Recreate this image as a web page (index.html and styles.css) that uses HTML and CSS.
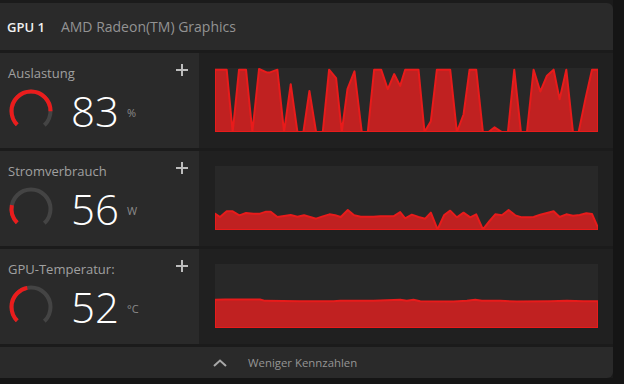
FILE: index.html
```html
<!DOCTYPE html>
<html lang="de">

<head>
    <meta charset="UTF-8">
    <meta name="viewport" content="width=device-width, initial-scale=1.0">
    <title>GPU 1</title>
    <link rel="stylesheet" href="styles.css">
</head>

<body>
    <div class="panel">
        <div class="head">
            <span class="gpu">GPU 1</span>
            <span class="model">AMD Radeon(TM) Graphics</span>
        </div>

        <div class="row">
            <div class="info">
                <div class="top">
                    <span class="label">Auslastung</span>
                    <span class="plus"></span>
                </div>
                <div class="value">
                    <svg class="gauge" viewBox="0 0 44 44">
                        <circle class="track" cx="22" cy="22" r="19.5" stroke-dasharray="91.9 200"></circle>
                        <circle class="fill" cx="22" cy="22" r="19.5" stroke-dasharray="76.3 200"></circle>
                    </svg>
                    <span class="num">83</span>
                    <span class="unit">%</span>
                </div>
            </div>
            <div class="chart">
                <svg viewBox="45 42 1148 190" preserveAspectRatio="none">
                    <polygon class="area" points="45,47 80,47 98,232 117,47 138,47 157,232 177,45 200,55 210,55 232,47 252,232 272,90 292,232 310,232 328,110 348,232 368,232 387,47 408,72 425,232 442,105 463,52 485,232 503,232 522,47 543,47 563,105 582,60 600,95 615,47 655,47 673,232 692,200 710,47 750,47 770,232 790,180 808,47 828,47 848,232 865,232 883,218 905,232 923,232 942,47 962,232 980,232 1000,47 1020,112 1040,65 1060,47 1078,135 1098,47 1118,232 1135,232 1155,135 1175,47 1193,47 1193,232 45,232"></polygon>
                </svg>
            </div>
        </div>

        <div class="row">
            <div class="info">
                <div class="top">
                    <span class="label">Stromverbrauch</span>
                    <span class="plus"></span>
                </div>
                <div class="value">
                    <svg class="gauge" viewBox="0 0 44 44">
                        <circle class="track" cx="22" cy="22" r="19.5" stroke-dasharray="91.9 200"></circle>
                        <circle class="fill" cx="22" cy="22" r="19.5" stroke-dasharray="19 200"></circle>
                    </svg>
                    <span class="num">56</span>
                    <span class="unit">W</span>
                </div>
            </div>
            <div class="chart">
                <svg viewBox="45 50 1148 192" preserveAspectRatio="none">
                    <polygon class="area" points="45,193 60,203 80,186 98,186 118,198 138,191 160,193 180,193 198,187 212,187 232,203 252,200 272,197 292,202 312,198 330,203 348,208 368,201 388,195 405,198 422,203 443,182 462,198 482,202 500,202 520,202 540,201 560,201 580,201 600,188 615,207 635,196 655,203 675,208 692,190 712,240 732,197 750,184 770,204 790,190 810,204 828,195 848,240 868,215 885,195 905,198 925,182 945,198 965,204 985,204 1000,203 1020,196 1040,191 1060,186 1078,203 1098,195 1118,199 1138,197 1158,192 1175,194 1193,235 1193,242 45,242"></polygon>
                </svg>
            </div>
        </div>

        <div class="row">
            <div class="info">
                <div class="top">
                    <span class="label">GPU-Temperatur:</span>
                    <span class="plus"></span>
                </div>
                <div class="value">
                    <svg class="gauge" viewBox="0 0 44 44">
                        <circle class="track" cx="22" cy="22" r="19.5" stroke-dasharray="91.9 200"></circle>
                        <circle class="fill" cx="22" cy="22" r="19.5" stroke-dasharray="42 200"></circle>
                    </svg>
                    <span class="num">52</span>
                    <span class="unit">°C</span>
                </div>
            </div>
            <div class="chart">
                <svg viewBox="45 45 1148 191" preserveAspectRatio="none">
                    <polygon class="area" points="45,152 75,151 180,151 195,155 300,156 400,156 420,155 520,155 600,152 620,155 640,152 660,156 760,157 800,155 825,152 845,155 900,155 950,157 1050,156 1100,155 1150,156 1193,156 1193,236 45,236"></polygon>
                </svg>
            </div>
        </div>

        <div class="foot">
            <svg class="chev" viewBox="0 0 14 8">
                <polyline points="1,7 7,1.5 13,7"></polyline>
            </svg>
            <span class="less">Weniger Kennzahlen</span>
        </div>
    </div>
</body>

</html>
```

FILE: styles.css
```css
* {
    margin: 0;
    padding: 0;
    box-sizing: border-box;
}

body {
    background: #151515;
    font-family: "Open Sans", "Noto Sans", sans-serif;
    width: 624px;
    height: 384px;
    overflow: hidden;
}

.panel {
    width: 613px;
    padding-top: 3px;
    display: flex;
    flex-direction: column;
    gap: 3px;
    background: #1b1b1b;
}

.head {
    height: 47px;
    background: #2a2a2a;
    border-top-right-radius: 6px;
    display: flex;
    align-items: center;
    padding-left: 7px;
    gap: 16px;
}

.gpu {
    color: #f0f0f0;
    font-size: 13px;
    font-weight: 600;
}

.model {
    color: #939393;
    font-size: 14px;
}

.row {
    height: 95px;
    display: flex;
}

.info {
    width: 199px;
    background: #2a2a2a;
    padding: 11px 11px 0 8px;
}

.top {
    display: flex;
    justify-content: space-between;
    align-items: flex-start;
}

.label {
    color: #a0a0a0;
    font-size: 13px;
}

.plus {
    width: 12px;
    height: 12px;
    background:
        linear-gradient(#bdbdbd, #bdbdbd) center / 12px 2px no-repeat,
        linear-gradient(#bdbdbd, #bdbdbd) center / 2px 12px no-repeat;
}

.value {
    display: flex;
    align-items: center;
    margin-top: 7px;
}

.gauge {
    width: 44px;
    height: 44px;
    margin-left: 1px;
    transform: rotate(135deg);
}

.gauge circle {
    fill: none;
    stroke-width: 4;
}

.track {
    stroke: #444;
}

.fill {
    stroke: #ea1c1c;
}

.num {
    color: #fff;
    font-size: 42px;
    font-weight: 300;
    line-height: 44px;
    margin-left: 18px;
}

.unit {
    color: #8a8a8a;
    font-size: 11px;
    margin-left: 8px;
    margin-top: 2px;
}

.chart {
    flex: 1;
    background: #202020;
    padding: 15px 15px 0 16px;
}

.chart svg {
    display: block;
    width: 383px;
    height: 64px;
    background: #282828;
}

.area {
    fill: #c02121;
    stroke: #e81b1b;
    stroke-width: 2;
    stroke-linejoin: round;
    vector-effect: non-scaling-stroke;
}

.foot {
    height: 31px;
    background: #2a2a2a;
    border-bottom-right-radius: 6px;
    display: flex;
    align-items: center;
    padding-left: 213px;
}

.chev {
    width: 14px;
    height: 8px;
}

.chev polyline {
    fill: none;
    stroke: #a8a8a8;
    stroke-width: 2;
}

.less {
    color: #959595;
    font-size: 11.4px;
    margin-left: 21px;
}
```
